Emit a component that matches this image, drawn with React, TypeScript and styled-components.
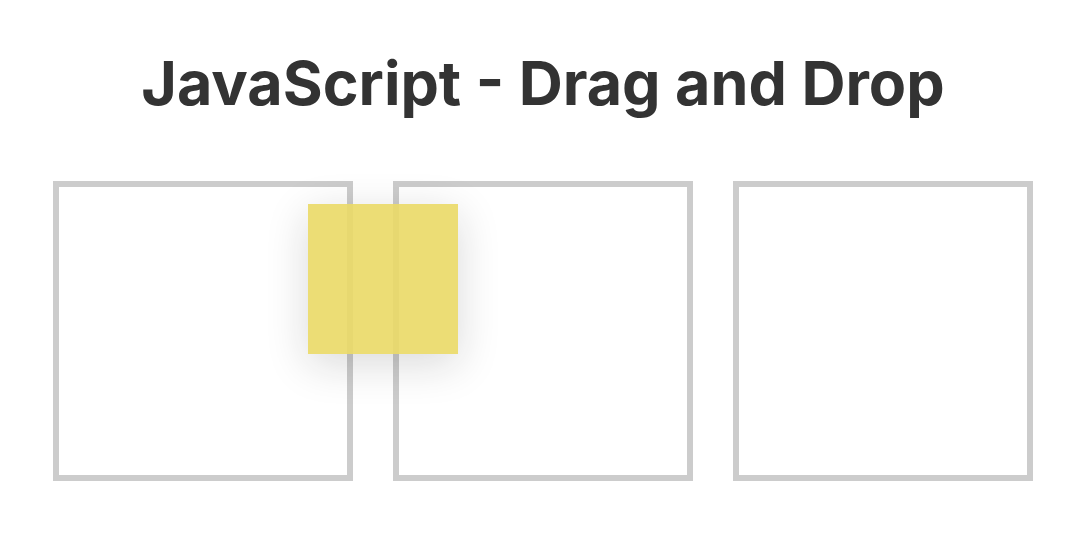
import React from 'react';
import styled, { createGlobalStyle } from 'styled-components';

const GlobalStyle = createGlobalStyle`
  html, body {
    margin: 0;
    padding: 0;
    background: #ffffff;
  }
  body {
    font-family: Inter, "Noto Sans", sans-serif;
  }
`;

const Page = styled.div`
  position: relative;
  width: 1090px;
  height: 538px;
  overflow: hidden;
`;

const Title = styled.h1`
  margin: 0;
  padding: 51px 4px 0 0;
  text-align: center;
  font-size: 61px;
  line-height: 64px;
  font-weight: 700;
  color: #333333;
`;

const Boxes = styled.div`
  display: flex;
  gap: 40px;
  margin: 66px 0 0 53px;
`;

const Box = styled.div`
  box-sizing: border-box;
  width: 300px;
  height: 300px;
  border: 6px solid #cccccc;
  background: #ffffff;
`;

// the item being dragged, floating over the first two boxes
const Item = styled.div`
  position: absolute;
  left: 308px;
  top: 204px;
  width: 150px;
  height: 150px;
  background: rgb(234, 218, 103);
  opacity: 0.9;
  box-shadow: 0 10px 40px rgba(0, 0, 0, 0.16);
  cursor: move;
`;

const App = () => (
  <Page>
    <GlobalStyle />
    <Title>JavaScript - Drag and Drop</Title>
    <Boxes>
      <Box />
      <Box />
      <Box />
    </Boxes>
    <Item draggable />
  </Page>
);

export default App;
